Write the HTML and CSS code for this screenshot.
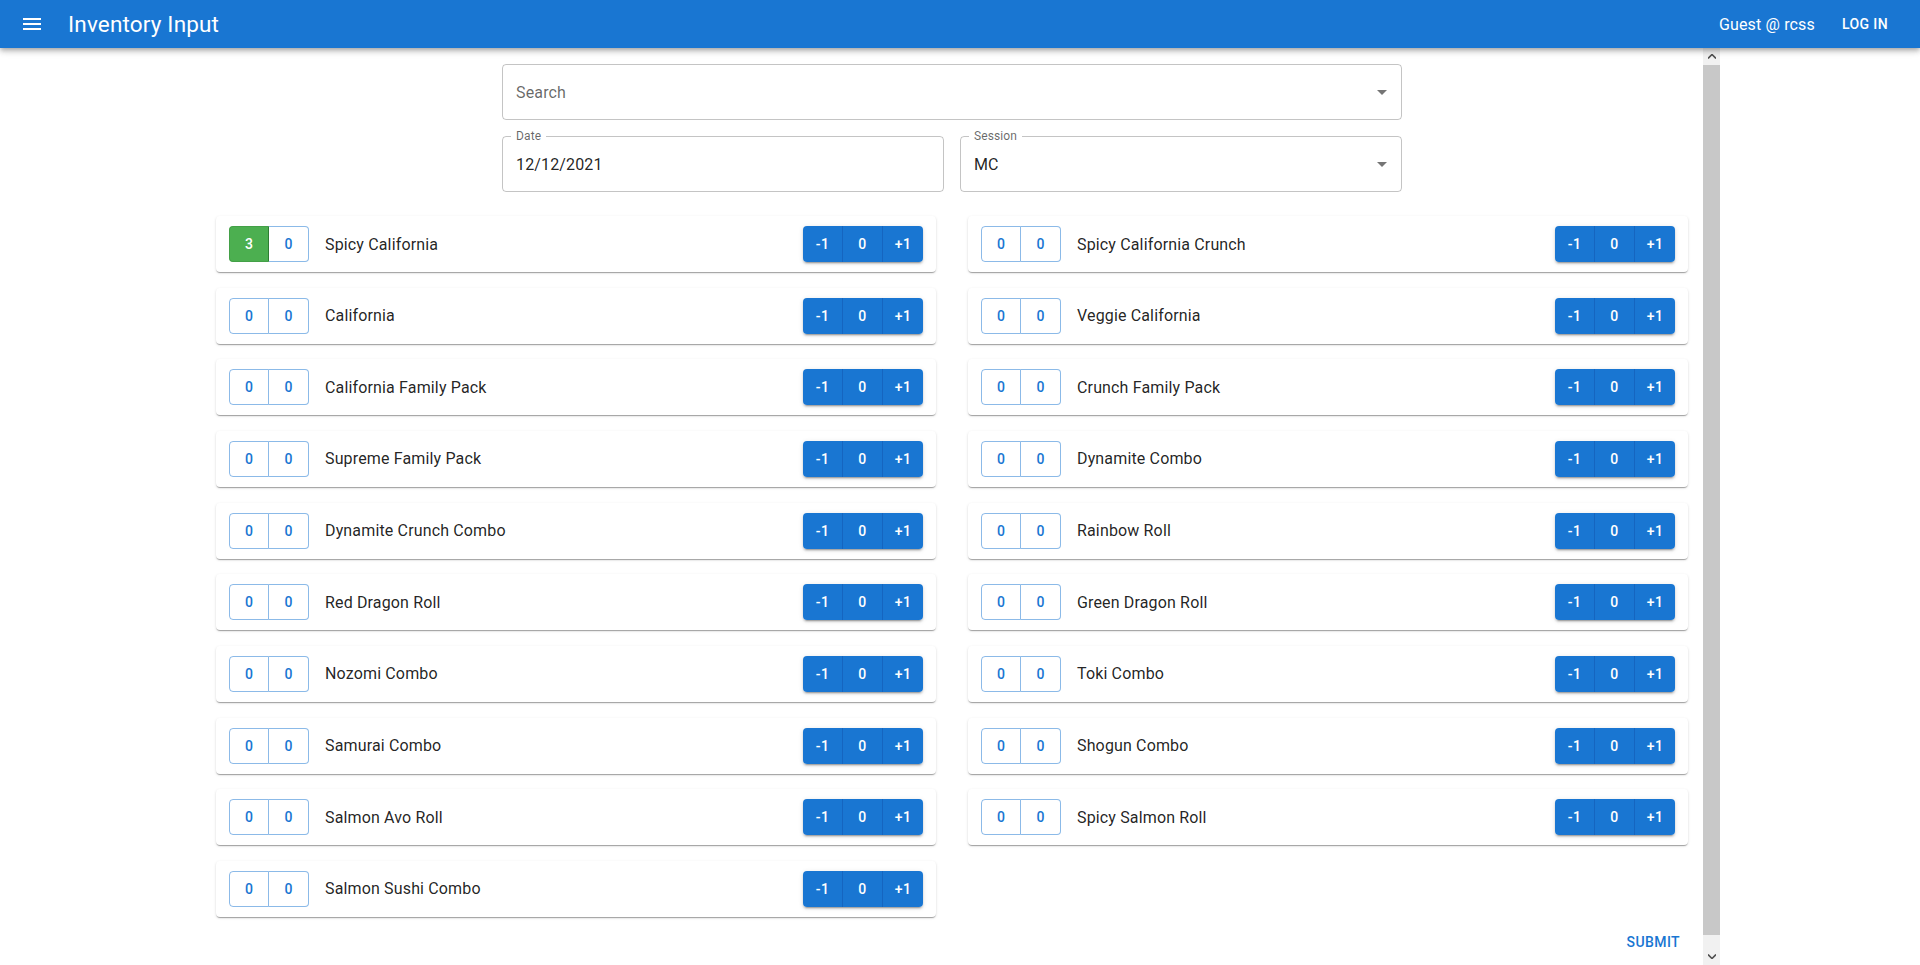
FILE: index.html
```html
<!DOCTYPE html>
<html lang="en">
<head>
<meta charset="utf-8">
<title>Inventory Input</title>
<link rel="stylesheet" href="styles.css">
</head>
<body>
<header class="appbar">
  <div class="toolbar">
    <button class="icon-btn" aria-label="menu">
      <svg viewBox="0 0 24 24" width="24" height="24"><path fill="#fff" d="M3 18h18v-2H3v2zm0-5h18v-2H3v2zm0-7v2h18V6H3z"/></svg>
    </button>
    <h1 class="title">Inventory Input</h1>
    <span class="spacer"></span>
    <span class="user">Guest @ rcss</span>
    <button class="login">Log in</button>
  </div>
</header>

<main class="main">
  <div class="container">
    <div class="filters">
      <div class="field field-wide">
        <span class="placeholder">Search</span>
        <svg class="arrow" viewBox="0 0 24 24" width="24" height="24"><path d="M7 10l5 5 5-5z"/></svg>
      </div>
      <div class="field-row">
        <div class="field">
          <span class="float-label">Date</span>
          <span class="value">12/12/2021</span>
        </div>
        <div class="field">
          <span class="float-label">Session</span>
          <span class="value">MC</span>
          <svg class="arrow" viewBox="0 0 24 24" width="24" height="24"><path d="M7 10l5 5 5-5z"/></svg>
        </div>
      </div>
    </div>

    <div class="grid" id="grid"></div>

    <div class="actions">
      <button class="submit">Submit</button>
    </div>
  </div>

  <div class="scrollbar" aria-hidden="true">
    <div class="sb-btn"><svg viewBox="0 0 8 5" width="8" height="5"><path d="M0 4.5L4 0.5L8 4.5" fill="none" stroke="#505050" stroke-width="1.6"/></svg></div>
    <div class="sb-track"><div class="sb-thumb"></div></div>
    <div class="sb-btn"><svg viewBox="0 0 8 5" width="8" height="5"><path d="M0 0.5L4 4.5L8 0.5" fill="none" stroke="#505050" stroke-width="1.6"/></svg></div>
  </div>
</main>

<script>
  var items = [
    ["Spicy California", 3], ["Spicy California Crunch", 0],
    ["California", 0], ["Veggie California", 0],
    ["California Family Pack", 0], ["Crunch Family Pack", 0],
    ["Supreme Family Pack", 0], ["Dynamite Combo", 0],
    ["Dynamite Crunch Combo", 0], ["Rainbow Roll", 0],
    ["Red Dragon Roll", 0], ["Green Dragon Roll", 0],
    ["Nozomi Combo", 0], ["Toki Combo", 0],
    ["Samurai Combo", 0], ["Shogun Combo", 0],
    ["Salmon Avo Roll", 0], ["Spicy Salmon Roll", 0],
    ["Salmon Sushi Combo", 0]
  ];
  var grid = document.getElementById("grid");
  items.forEach(function (it) {
    var card = document.createElement("div");
    card.className = "card";
    card.innerHTML =
      '<div class="toggle">' +
        '<span class="tg' + (it[1] > 0 ? ' tg-on' : '') + '">' + it[1] + '</span>' +
        '<span class="tg">0</span>' +
      '</div>' +
      '<span class="name">' + it[0] + '</span>' +
      '<div class="group">' +
        '<button class="gb">-1</button>' +
        '<button class="gb">0</button>' +
        '<button class="gb">+1</button>' +
      '</div>';
    grid.appendChild(card);
  });
</script>
</body>
</html>
```

FILE: styles.css
```css
* { box-sizing: border-box; }
html, body { margin: 0; padding: 0; }
body {
  font-family: Roboto, "Liberation Sans", Arial, sans-serif;
  background: #fff;
  color: rgba(0,0,0,0.87);
  overflow: hidden;
  height: 965px;
}
button { font-family: inherit; border: 0; background: none; cursor: pointer; padding: 0; margin: 0; }

.appbar {
  position: relative;
  z-index: 2;
  background: #1976d2;
  color: #fff;
  height: 48px;
  box-shadow: 0px 2px 4px -1px rgba(0,0,0,0.2), 0px 4px 5px 0px rgba(0,0,0,0.14), 0px 1px 10px 0px rgba(0,0,0,0.12);
}
.toolbar {
  display: flex;
  align-items: center;
  height: 48px;
  padding: 0 24px 0 8px;
}
.icon-btn {
  width: 48px; height: 48px;
  display: flex; align-items: center; justify-content: center;
  margin-right: 12px;
}
.icon-btn svg { display: block; }
.title {
  margin: 0;
  font-size: 22.5px;
  font-weight: 400;
  letter-spacing: 0.0075em;
  line-height: 1;
}
.spacer { flex: 1; }
.user { font-size: 16px; letter-spacing: 0.00938em; margin-right: 19px; }
.login {
  color: #fff;
  font-size: 14px;
  font-weight: 500;
  letter-spacing: 0.02857em;
  text-transform: uppercase;
  padding: 6px 8px;
  line-height: 24px;
}

.main {
  position: relative;
  height: 917px;
  padding-right: 16px;
}
.container {
  width: 1472px;
  margin: 0 auto;
  padding-top: 16px;
}
.filters {
  width: 900px;
  margin: 0 auto;
  display: flex;
  flex-direction: column;
  gap: 16px;
}
.field-row {
  display: grid;
  grid-template-columns: 1fr 1fr;
  gap: 16px;
}
.field {
  position: relative;
  height: 56px;
  border: 1px solid rgba(0,0,0,0.23);
  border-radius: 4px;
  display: flex;
  align-items: center;
  padding: 0 13px;
  font-size: 16px;
}
.placeholder { color: rgba(0,0,0,0.6); letter-spacing: 0.00938em; }
.value { color: rgba(0,0,0,0.87); letter-spacing: 0.00938em; }
.float-label {
  position: absolute;
  left: 8px;
  top: -8px;
  padding: 0 5px;
  background: #fff;
  font-size: 12px;
  line-height: 14px;
  color: rgba(0,0,0,0.6);
  letter-spacing: 0.00938em;
}
.arrow {
  position: absolute;
  right: 7px;
  top: 15px;
  fill: rgba(0,0,0,0.54);
}

.grid {
  margin-top: 24px;
  display: grid;
  grid-template-columns: 1fr 1fr;
  column-gap: 32px;
  row-gap: 15.67px;
}
.card {
  height: 56px;
  background: #fff;
  border-radius: 4px;
  box-shadow: 0px 2px 1px -1px rgba(0,0,0,0.2), 0px 1px 1px 0px rgba(0,0,0,0.14), 0px 1px 3px 0px rgba(0,0,0,0.12);
  display: flex;
  align-items: center;
  padding: 0 13px;
}
.toggle {
  display: flex;
  height: 36px;
}
.tg {
  width: 40px;
  height: 36px;
  display: flex;
  align-items: center;
  justify-content: center;
  font-size: 14px;
  font-weight: 500;
  color: #1976d2;
  border: 1px solid rgba(25,118,210,0.5);
}
.tg:first-child { border-radius: 4px 0 0 4px; }
.tg:last-child { border-radius: 0 4px 4px 0; border-left: 0; }
.tg-on {
  background: #4caf50;
  color: #fff;
  border-color: #43a047;
  border-right: 1px solid #2e7d32;
}
.name {
  flex: 1;
  margin-left: 16px;
  font-size: 16px;
  letter-spacing: 0.00938em;
}
.group {
  display: flex;
  height: 36px;
  border-radius: 4px;
  box-shadow: 0px 3px 1px -2px rgba(0,0,0,0.2), 0px 2px 2px 0px rgba(0,0,0,0.14), 0px 1px 5px 0px rgba(0,0,0,0.12);
}
.gb {
  width: 40px;
  height: 36px;
  background: #1976d2;
  color: #fff;
  font-size: 14px;
  font-weight: 500;
  letter-spacing: 0.02857em;
  border-right: 1px solid #1565c0;
}
.gb:first-child { border-radius: 4px 0 0 4px; }
.gb:last-child { border-radius: 0 4px 4px 0; border-right: 0; }

.actions {
  display: flex;
  justify-content: flex-end;
  margin-top: 7px;
}
.submit {
  color: #1976d2;
  font-size: 14px;
  font-weight: 500;
  letter-spacing: 0.02857em;
  text-transform: uppercase;
  padding: 6px 8px;
  line-height: 24px;
}

.scrollbar {
  position: absolute;
  top: 0;
  left: 1703px;
  width: 17px;
  height: 917px;
  background: #f1f1f1;
  display: flex;
  flex-direction: column;
}
.sb-btn {
  height: 17px;
  display: flex;
  align-items: center;
  justify-content: center;
}
.sb-btn svg { display: block; }
.sb-track { flex: 1; padding-bottom: 13px; display: flex; }
.sb-thumb { flex: 1; background: #c8c8c8; }
```
